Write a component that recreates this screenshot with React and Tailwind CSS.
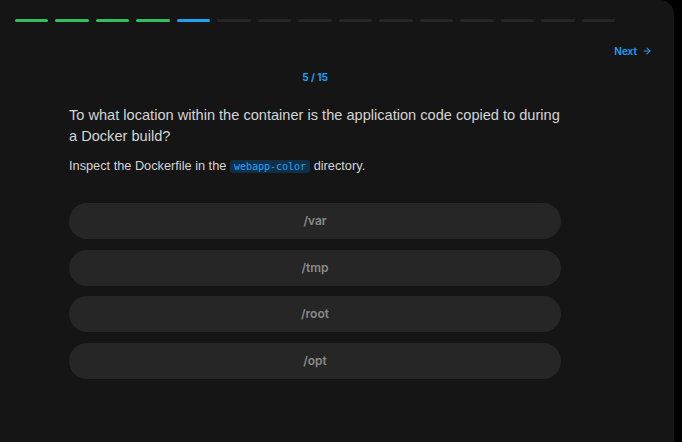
import React from 'react';

const steps = Array.from({ length: 15 }, (_, i) => i);
const options = ['/var', '/tmp', '/root', '/opt'];

const App = () => {
    return (
        <div className="w-full h-[442px] bg-black overflow-hidden" style={{ fontFamily: 'Inter, "Noto Sans", sans-serif' }}>
            <div className="w-[674px] h-full bg-[#151515] rounded-tr-[14px] flex flex-col">
                {/* progress */}
                <div className="flex gap-[7px] w-[600px] ml-[15px] mt-[19px]">
                    {steps.map((i) => (
                        <div
                            key={i}
                            className={
                                i < 4
                                    ? 'flex-1 h-[3px] rounded-full bg-[#2fbf5f]'
                                    : i === 4
                                    ? 'flex-1 h-[3px] rounded-full bg-[#1da1f2]'
                                    : 'flex-1 h-[3px] rounded-full bg-[#262626]'
                            }
                        />
                    ))}
                </div>

                <div className="flex justify-end pr-[22px] mt-[22px]">
                    <button className="flex items-center gap-[5px] text-[10px] leading-[14px] font-semibold text-[#1da1f2]">
                        Next
                        <svg width="10" height="10" viewBox="0 0 24 24" fill="none" stroke="currentColor" strokeWidth="2.5" strokeLinecap="round" strokeLinejoin="round">
                            <path d="M5 12h14" />
                            <path d="m12 5 7 7-7 7" />
                        </svg>
                    </button>
                </div>

                <div className="ml-[69px] w-[492px] flex flex-col">
                    <div className="text-center text-[10px] leading-[14px] font-bold text-[#1da1f2] mt-[12px]">5 / 15</div>

                    <div style={{ fontFamily: '"Liberation Sans", Arial, sans-serif' }}>
                        <p className="mt-[21px] text-[14.6px] leading-[21px] text-[#d4d4d4]">
                            To what location within the container is the application code copied to during a Docker build?
                        </p>
                        <p className="mt-[10px] text-[12.75px] leading-[18px] text-[#d4d4d4]">
                            Inspect the Dockerfile in the{' '}
                            <code
                                className="px-[4px] py-[1px] rounded-[3px] bg-[#0f3048] text-[#2aa4f4] text-[10px]"
                                style={{ fontFamily: '"DejaVu Sans Mono", "Liberation Mono", monospace' }}
                            >
                                webapp-color
                            </code>{' '}
                            directory.
                        </p>
                    </div>

                    <div className="mt-[27px] flex flex-col gap-[10.7px]">
                        {options.map((o) => (
                            <button
                                key={o}
                                className="h-[36px] w-full rounded-full bg-[#262626] text-[12px] font-semibold text-[#8a8a8a]"
                            >
                                {o}
                            </button>
                        ))}
                    </div>
                </div>
            </div>
        </div>
    );
};

export default App;
